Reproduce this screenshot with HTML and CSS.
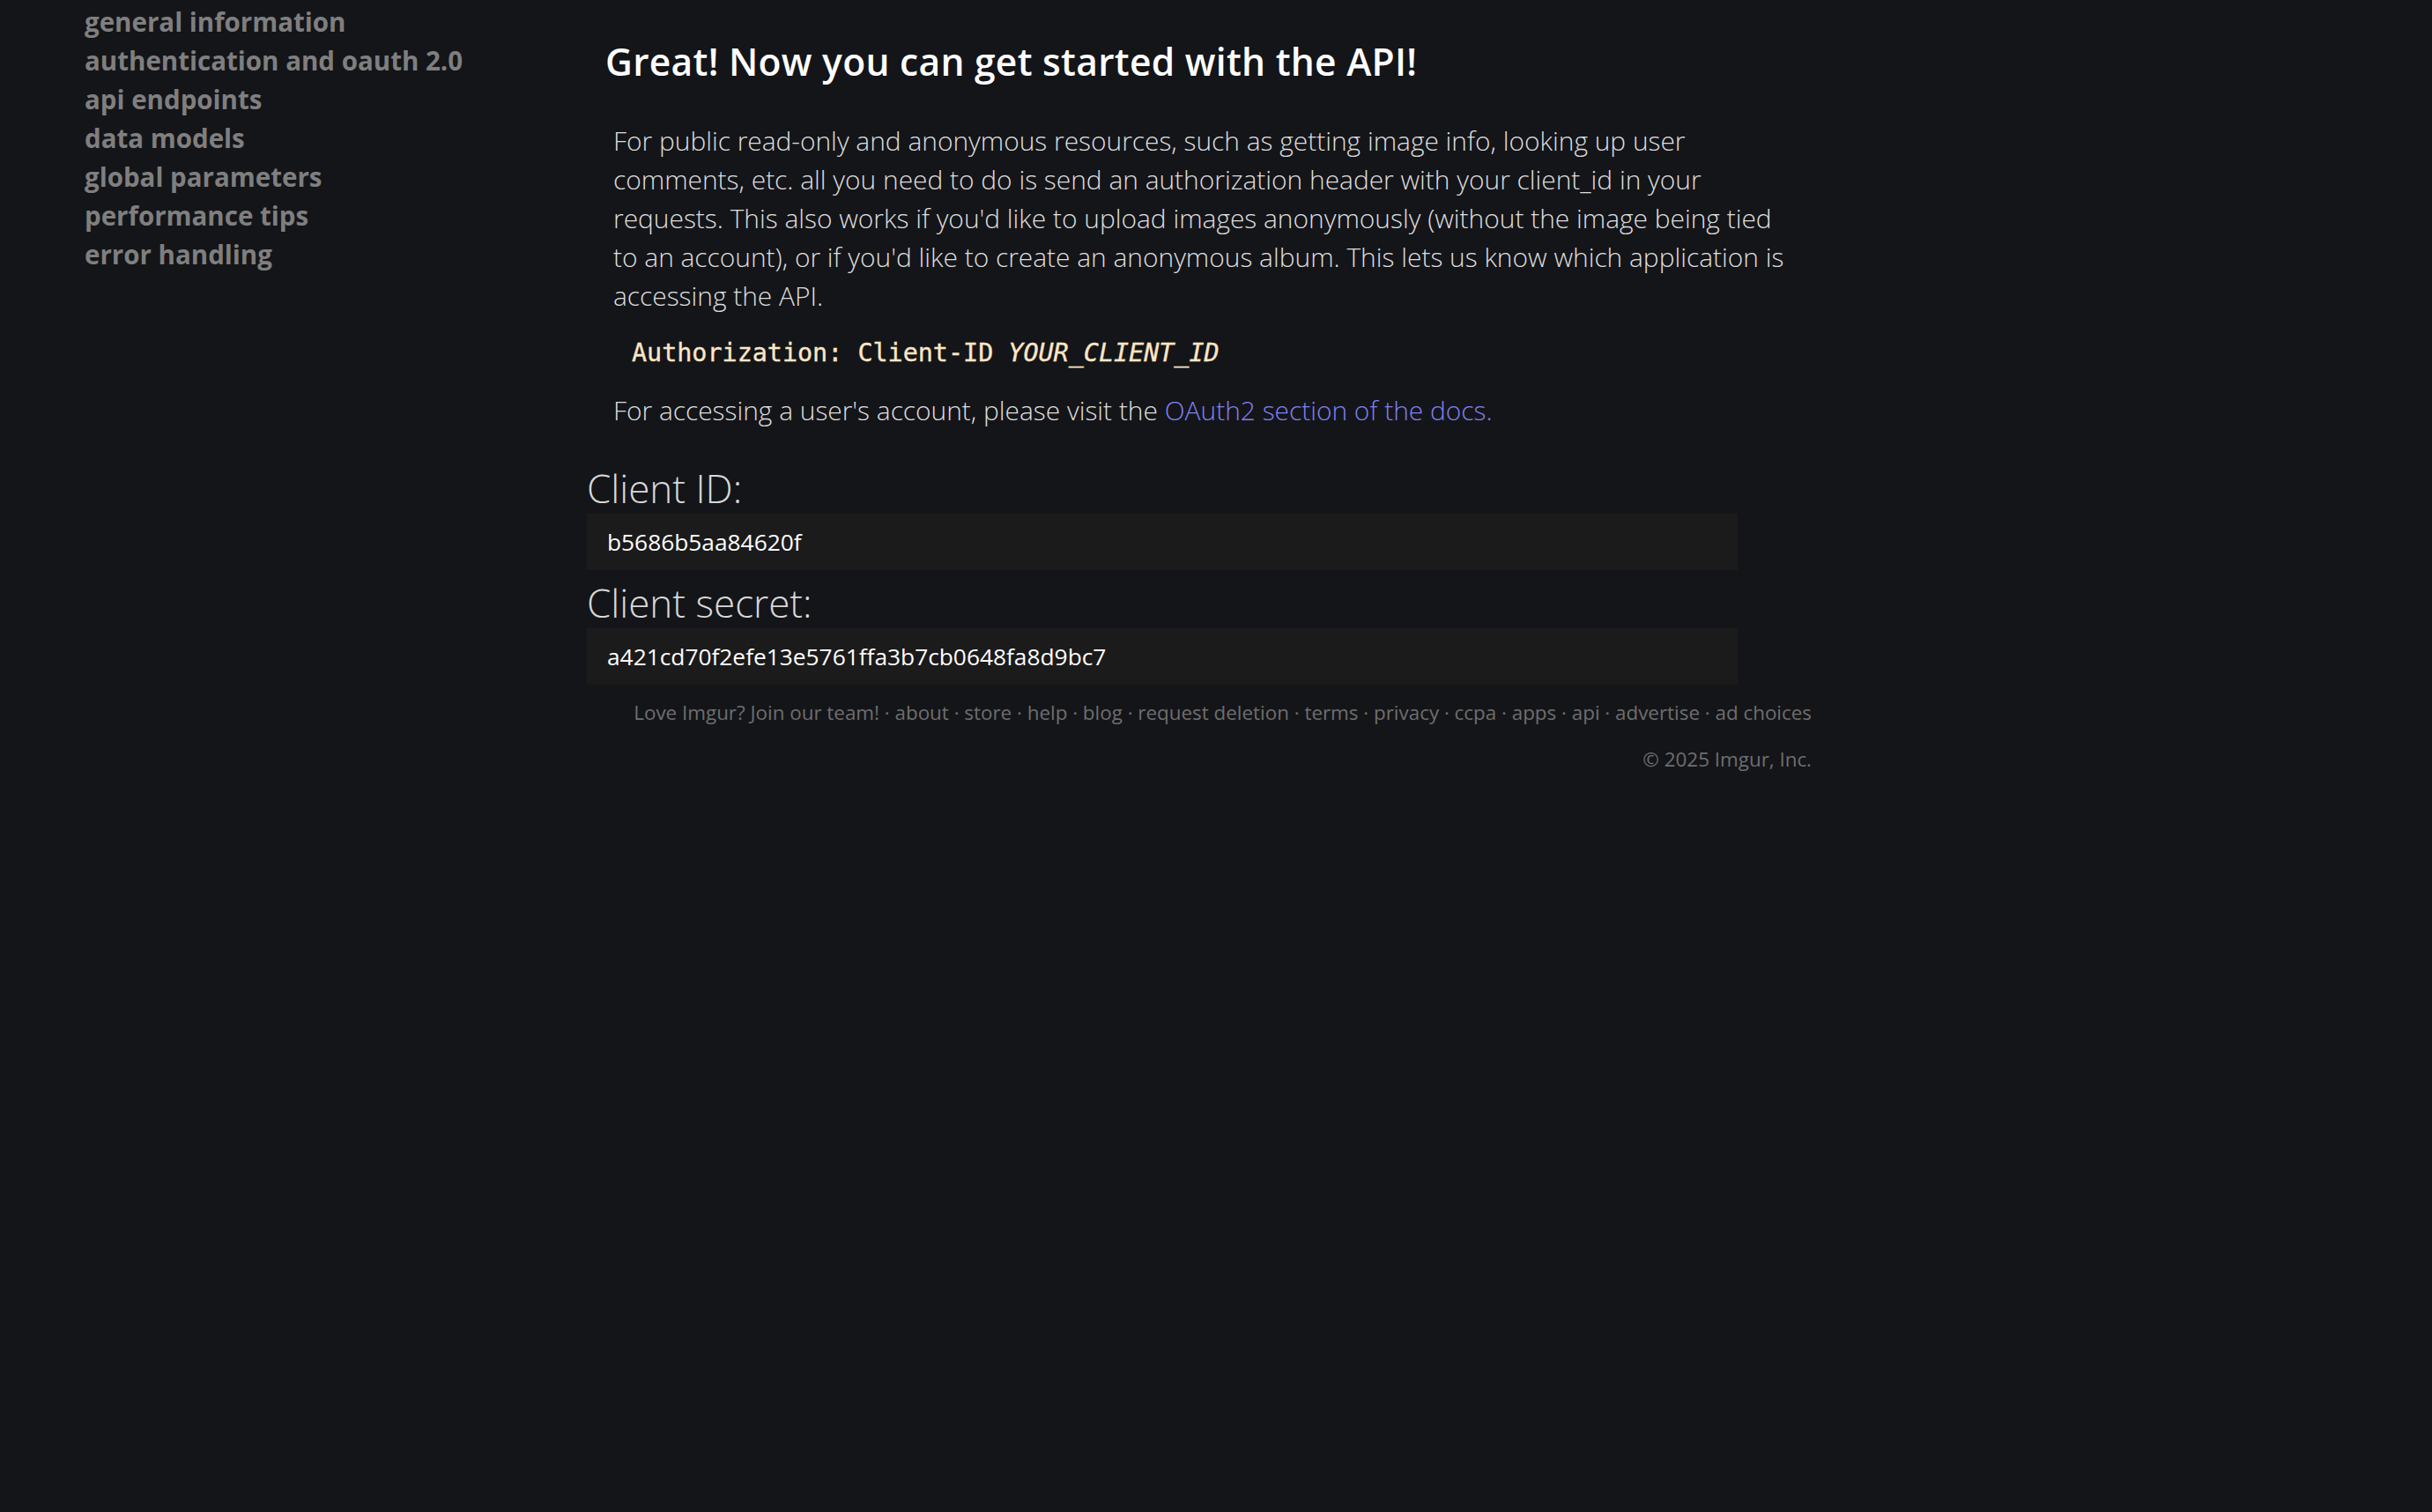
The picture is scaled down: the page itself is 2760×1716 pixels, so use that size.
FILE: index.html
```html
<!DOCTYPE html>
<html lang="en">
<head>
<meta charset="utf-8">
<title>Imgur API</title>
<link rel="stylesheet" href="styles.css">
</head>
<body>
<div class="page">
  <nav class="sidebar">
    <a class="nav-item" href="#">general information</a>
    <a class="nav-item" href="#">authentication and oauth 2.0</a>
    <a class="nav-item" href="#">api endpoints</a>
    <a class="nav-item" href="#">data models</a>
    <a class="nav-item" href="#">global parameters</a>
    <a class="nav-item" href="#">performance tips</a>
    <a class="nav-item" href="#">error handling</a>
  </nav>
  <main class="main">
    <h2 class="title">Great! Now you can get started with the API!</h2>
    <p class="para">For public read-only and anonymous resources, such as getting image info, looking up user comments, etc. all you need to do is send an authorization header with your client_id in your requests. This also works if you'd like to upload images anonymously (without the image being tied to an account), or if you'd like to create an anonymous album. This lets us know which application is accessing the API.</p>
    <pre class="code">Authorization: Client-ID <em>YOUR_CLIENT_ID</em></pre>
    <p class="para para-small">For accessing a user's account, please visit the <a class="link" href="#">OAuth2 section of the docs.</a></p>
    <h3 class="label label-first">Client ID:</h3>
    <div class="value">b5686b5aa84620f</div>
    <h3 class="label">Client secret:</h3>
    <div class="value">a421cd70f2efe13e5761ffa3b7cb0648fa8d9bc7</div>
    <footer class="footer">
      <div class="footer-links">Love Imgur? Join our team! · about · store · help · blog · request deletion · terms · privacy · ccpa · apps · api · advertise · ad choices</div>
      <div class="footer-copy">© 2025 Imgur, Inc.</div>
    </footer>
  </main>
</div>
</body>
</html>
```
FILE: styles.css
```css
html, body {
  margin: 0;
  padding: 0;
  background: #141519;
}
body {
  font-family: "Open Sans", "Noto Sans", sans-serif;
  min-height: 1716px;
}
.page {
  display: flex;
  align-items: flex-start;
}
.sidebar {
  display: flex;
  flex-direction: column;
  width: 666px;
  padding: 3px 0 0 96px;
  box-sizing: border-box;
  flex-shrink: 0;
}
.nav-item {
  font-size: 29.5px;
  font-weight: 700;
  line-height: 44px;
  color: #7f7f7f;
  text-decoration: none;
}
.main {
  width: 1390px;
  display: flex;
  flex-direction: column;
}
.title {
  margin: 42px 0 0 21px;
  font-size: 42.5px;
  font-weight: 600;
  line-height: 56px;
  color: #ffffff;
  letter-spacing: 0.3px;
}
.para {
  margin: 40px 0 0 30px;
  width: 1345px;
  font-size: 29.9px;
  font-weight: 300;
  line-height: 44px;
  color: #dedede;
}
.para-small {
  margin-top: 21px;
}
.code {
  margin: 21px 0 0 51px;
  font-family: "DejaVu Sans Mono", "Liberation Mono", monospace;
  font-size: 28.4px;
  font-weight: 400;
  -webkit-text-stroke: 0.35px #fde6c4;
  line-height: 44px;
  color: #fde6c4;
}
.code em {
  font-style: italic;
}
.link {
  color: #8080f0;
  text-decoration: none;
}
.label {
  margin: 8px 0 0 0;
  font-size: 44px;
  font-weight: 300;
  line-height: 58px;
  color: #d8d8d8;
}
.label-first {
  margin-top: 37px;
}
.value {
  width: 1306px;
  height: 64px;
  box-sizing: border-box;
  padding-left: 23px;
  background: #1b1b1b;
  font-size: 26.3px;
  font-weight: 400;
  line-height: 64px;
  color: #ffffff;
}
.footer {
  margin-top: 15.5px;
  text-align: right;
  color: #6e6e6e;
  font-size: 22.4px;
  font-weight: 400;
  line-height: 32px;
}
.footer-copy {
  margin-top: 21px;
}
```
